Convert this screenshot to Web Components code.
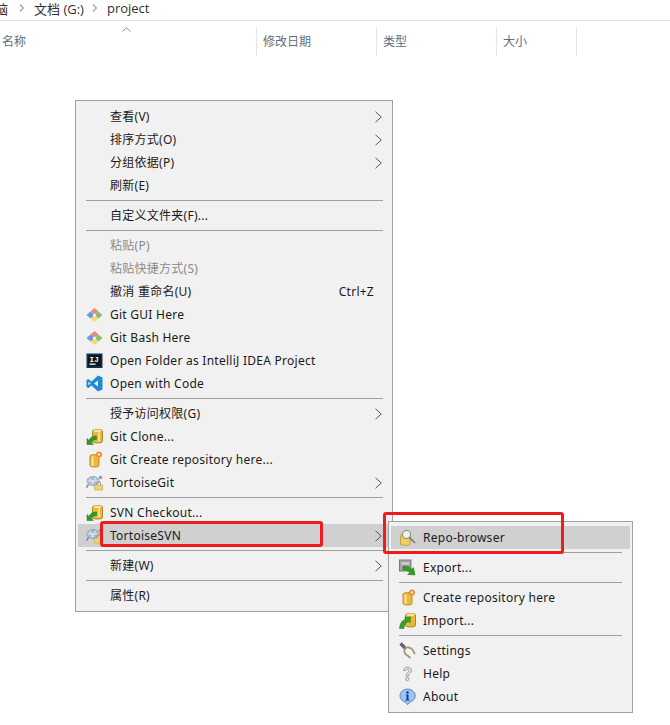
<!DOCTYPE html>
<html lang="zh">
<head>
<meta charset="utf-8">
<title>project</title>
<style>
  html, body { margin: 0; height: 100%; background: #fff; }
  body { overflow: hidden; font-family: "Open Sans", "Noto Sans CJK SC", sans-serif; }
</style>
</head>
<body>
<address-bar></address-bar>
<column-header></column-header>

<context-menu style="left:75px;top:100px;width:318px">
  <menu-item zh arrow>查看(V)</menu-item>
  <menu-item zh arrow>排序方式(O)</menu-item>
  <menu-item zh arrow>分组依据(P)</menu-item>
  <menu-item zh>刷新(E)</menu-item>
  <menu-sep></menu-sep>
  <menu-item zh>自定义文件夹(F)...</menu-item>
  <menu-sep></menu-sep>
  <menu-item zh disabled>粘贴(P)</menu-item>
  <menu-item zh disabled>粘贴快捷方式(S)</menu-item>
  <menu-item zh shortcut="Ctrl+Z">撤消 重命名(U)</menu-item>
  <menu-item icon="git">Git GUI Here</menu-item>
  <menu-item icon="git">Git Bash Here</menu-item>
  <menu-item icon="idea">Open Folder as IntelliJ IDEA Project</menu-item>
  <menu-item icon="code">Open with Code</menu-item>
  <menu-sep></menu-sep>
  <menu-item zh arrow>授予访问权限(G)</menu-item>
  <menu-item icon="clone">Git Clone...</menu-item>
  <menu-item icon="create">Git Create repository here...</menu-item>
  <menu-item icon="tortoise" arrow>TortoiseGit</menu-item>
  <menu-sep></menu-sep>
  <menu-item icon="clone">SVN Checkout...</menu-item>
  <menu-item icon="tortoise" arrow active>TortoiseSVN</menu-item>
  <menu-sep></menu-sep>
  <menu-item zh arrow>新建(W)</menu-item>
  <menu-sep></menu-sep>
  <menu-item zh>属性(R)</menu-item>
</context-menu>

<context-menu class="sub" style="left:388px;top:521px;width:245px">
  <menu-item icon="browser" active>Repo-browser</menu-item>
  <menu-sep></menu-sep>
  <menu-item icon="export">Export...</menu-item>
  <menu-sep></menu-sep>
  <menu-item icon="create">Create repository here</menu-item>
  <menu-item icon="import">Import...</menu-item>
  <menu-sep></menu-sep>
  <menu-item icon="settings">Settings</menu-item>
  <menu-item icon="help">Help</menu-item>
  <menu-item icon="about">About</menu-item>
</context-menu>

<red-mark style="left:100px;top:521px;width:223px;height:26px"></red-mark>
<red-mark style="left:383px;top:512px;width:181px;height:42px"></red-mark>

<script>
const ICONS = {
  git: `<path d="M8.500 2 12.500 5.500 8.500 9 4.500 5.500z" fill="#e58a7c"/><path d="M12.500 5.500 16.500 9 12.500 12.500 8.500 9z" fill="#86bf70"/><path d="M8.500 9 12.500 12.500 8.500 16 4.500 12.500z" fill="#f5d978"/><path d="M4.500 5.500 8.500 9 4.500 12.500 .5 9z" fill="#6a9bdc"/><circle cx="8.500" cy="9" r="1.600" fill="#f6f1ea"/>`,
  idea: `<rect x=".5" y="1.500" width="16" height="14.500" fill="#0d3558"/><rect x="2" y="3" width="13" height="11.500" fill="#10161d"/><text x="3.500" y="9.500" font-family="Liberation Mono" font-weight="700" font-size="7.500" fill="#fff">IJ</text><rect x="3.500" y="11.500" width="6" height="1.300" fill="#fff"/>`,
  code: `<path d="M12 .5 16.500 2.500v12L12 16.500 5.500 10.500 2.500 13 .5 12V5L2.500 4l3 2.500z" fill="#1f8ad2"/><path d="M12 5.500 8 8.500 12 11.500z" fill="#f1f1f1"/><path d="M2.500 6.500v4l2-2z" fill="#f1f1f1"/>`,
  clone: `<path d="M6.500 3c0-2 10-2 10 0v10.500c0 2-10 2-10 0z" fill="#e9b93a" stroke="#9a7416" stroke-width=".8"/><ellipse cx="11.500" cy="2.800" rx="4" ry="1.300" fill="#f8e59a"/><path d="M13 4.500v9" stroke="#fbe7a4" stroke-width="1.500"/><path d="M1 16.500V10.500l1.800 1.700C4.500 9.500 7 8 10.500 8v3.500c-2 0-4 1-5.200 2.500l2 2.500z" fill="#2e9e22" stroke="#196f12" stroke-width=".5"/>`,
  create: `<path d="M4 5c0-1.800 9-1.800 9 0v9.500c0 2-9 2-9 0z" fill="#eeb93a" stroke="#a87d18" stroke-width=".8"/><path d="M6.500 5.500v9.500" stroke="#fbe7a4" stroke-width="2"/><circle cx="13" cy="3.500" r="3" fill="#f28a2e"/><circle cx="13" cy="3.500" r="1.200" fill="#fff0c8"/>`,
  import: `<path d="M6.500 3c0-2 10-2 10 0v10.500c0 2-10 2-10 0z" fill="#e9b93a" stroke="#9a7416" stroke-width=".8"/><ellipse cx="11.500" cy="2.800" rx="4" ry="1.300" fill="#f8e59a"/><path d="M.5 16.500C1 11 3.500 8 7 7L5.500 5.500l6-.5-.5 6-1.500-1.500C6.500 10.500 5 13 5 16.500z" fill="#35a528" stroke="#196f12" stroke-width=".5"/>`,
  tortoise: `<ellipse cx="7" cy="7" rx="6" ry="4.500" fill="#a9bbd3" stroke="#8496ad" stroke-width=".7"/><path d="M3.500 4l4 6M10 3.500 5.500 10.500M1.500 7h11" stroke="#eef2f8" stroke-width=".9"/><circle cx="14.500" cy="3.500" r="1.800" fill="#8d9db3"/><path d="M2.500 10.500.5 13.500" stroke="#77879c" stroke-width="1.500"/><path d="M8.500 11h8v5h-8z" fill="#f0d468" stroke="#b9a24a" stroke-width=".6"/><path d="M10.500 11V9.500a2 2 0 0 1 4 0V11" fill="none" stroke="#9a9a9a"/>`,
  browser: `<path d="M1.500 6.500c0-1.800 9.500-1.800 9.500 0v8.500c0 1.900-9.500 1.900-9.500 0z" fill="#f0cf5a" stroke="#a98f2e" stroke-width=".7"/><circle cx="7.500" cy="5.500" r="4" fill="#f2f2ec" stroke="#8b8b80" stroke-width="1.100"/><path d="M10.500 8.500 16 14" stroke="#77776c" stroke-width="1.600"/>`,
  export: `<rect x=".5" y="1" width="11.500" height="11" fill="#a6a6a6" stroke="#7a7a7a"/><path d="M2.500 3.500h7.500v2H2.500z" fill="#d6d6d6"/><path d="M4 7.500c3.500-1 7 0 8.500 3L14.500 8.500l1.500 7.500-7.500-.5 2-2C9.500 11.500 7 10.500 4 11z" fill="#2ea123" stroke="#196f12" stroke-width=".5"/>`,
  settings: `<path d="M1.500 1.500 7 7" stroke="#5a6478" stroke-width="3.200"/><path d="M5.500 7c2-2.500 6.500-2 8.500 1.500l2 3.500" fill="none" stroke="#a59a75" stroke-width="1.800"/><path d="M5.500 7c-1 2.500.5 5.500 3 6.500l3 2.500" fill="none" stroke="#a59a75" stroke-width="1.800"/>`,
  help: `<path d="M4.500 5.500c0-4.500 8-4.500 8 0 0 3-3 2.800-3 5.500h-2.500c0-3.200 3-3.200 3-5.500 0-1.800-3-1.800-3 0z" fill="#e4e4e4" stroke="#909090" stroke-width=".8"/><circle cx="8.300" cy="14" r="1.700" fill="#e4e4e4" stroke="#909090" stroke-width=".8"/>`,
  about: `<path d="M8.500 1a7.700 6.700 0 0 1 2.700 13L8.500 16.800 6.800 14.200A7.700 6.700 0 0 1 8.500 1z" fill="#9cc6f2" stroke="#3f74c4" stroke-width=".8"/><path d="M7.500 6.500h2v5h1v1h-4v-1h1v-4h-1z" fill="#12379a"/><circle cx="8.500" cy="4.500" r="1.200" fill="#12379a"/>`
};

function define(name, css, html, init) {
  customElements.define(name, class extends HTMLElement {
    connectedCallback() {
      if (this.shadowRoot) return;
      const root = this.attachShadow({ mode: "open" });
      root.innerHTML = `<style>${css}</style>${html}`;
      if (init) init(this, root);
    }
  });
}

define("address-bar", `
  :host { display: flex; align-items: center; box-sizing: border-box; padding-bottom: 4px;
    border-bottom: 1px solid #e3e3e3; height: 21px; overflow: hidden; color: #303030;
    font: 13px "Open Sans", "Noto Sans CJK SC", sans-serif; }
  span { white-space: nowrap; }
  .clip { margin-left: -5px; }
  svg { width: 5px; height: 8px; margin: 0 10px 0 8px; flex: none; }
  svg.first { margin-left: 11px; }
`, `
  <span class="clip">脑</span>
  <svg class="first" viewBox="0 0 5 8"><path d="M1 .5 4.500 4 1 7.500" fill="none" stroke="#a0a0a0" stroke-width="1.200"/></svg>
  <span>文档 (G:)</span>
  <svg viewBox="0 0 5 8"><path d="M1 .5 4.500 4 1 7.500" fill="none" stroke="#a0a0a0" stroke-width="1.200"/></svg>
  <span>project</span>
`);

define("column-header", `
  :host { display: grid; grid-template-columns: 257px 120px 120px 80px; height: 28px; margin-top: 7px; width: 577px;
    position: relative; color: #5f6e80; font: 12px "Open Sans", "Noto Sans CJK SC", sans-serif; }
  div { display: flex; align-items: center; box-sizing: border-box; padding: 0 0 2px 6px; border-right: 1px solid #e5e5e5; }
  div:first-of-type { padding-left: 2px; }
  svg { position: absolute; left: 122px; top: -1px; width: 9px; height: 5px; }
`, `
  <div>名称</div><div>修改日期</div><div>类型</div><div>大小</div>
  <svg viewBox="0 0 9 5"><path d="M.5 4.500 4.500 .8l4 3.700" fill="none" stroke="#8a8a8a"/></svg>
`);

define("context-menu", `
  :host { position: absolute; display: block; box-sizing: border-box; padding: 4px 2px;
    background: #f1f1f1; border: 1px solid #a0a0a0; }
`, `<slot></slot>`);

define("menu-sep", `
  :host { display: block; height: 1px; margin: 3px 7px 3px 8px; background: #a0a0a0; }
  :host-context(.sub) { margin-right: 8px; }
`, ``);

define("menu-item", `
  :host { display: flex; align-items: center; height: 23px; color: #1a1a1a; white-space: nowrap;
    font: 12px "Noto Sans", "Noto Sans CJK SC", sans-serif; letter-spacing: .26px; }
  :host([active]) { background: #d0d0d0; }
  :host([disabled]) { color: #8a8a8a; }
  :host([zh]) .txt { padding-bottom: 2px; }
  .ico { width: 17px; height: 17px; flex: none; margin: 0 7px 0 8px; }
  .txt { flex: 1; }
  .key { margin-right: 1px; }
  .arrow { width: 7px; height: 12px; flex: none; margin-right: 8px; }
`, `
  <svg class="ico" viewBox="0 0 17 17"></svg>
  <span class="txt"><slot></slot></span>
  <span class="key"></span>
  <svg class="arrow" viewBox="0 0 7 12"><path d="M.5 .8 6.300 6 .5 11.200" fill="none" stroke="#555"/></svg>
`, (el, root) => {
  root.querySelector(".ico").innerHTML = ICONS[el.getAttribute("icon")] || "";
  root.querySelector(".key").textContent = el.getAttribute("shortcut") || "";
  if (!el.hasAttribute("arrow")) root.querySelector(".arrow").style.visibility = "hidden";
});

// hand-drawn annotation boxes on top of the screenshot
define("red-mark", `
  :host { position: absolute; display: block; box-sizing: border-box; border: 3px solid #ee1c1c; border-radius: 3px; }
`, ``);
</script>
</body>
</html>
